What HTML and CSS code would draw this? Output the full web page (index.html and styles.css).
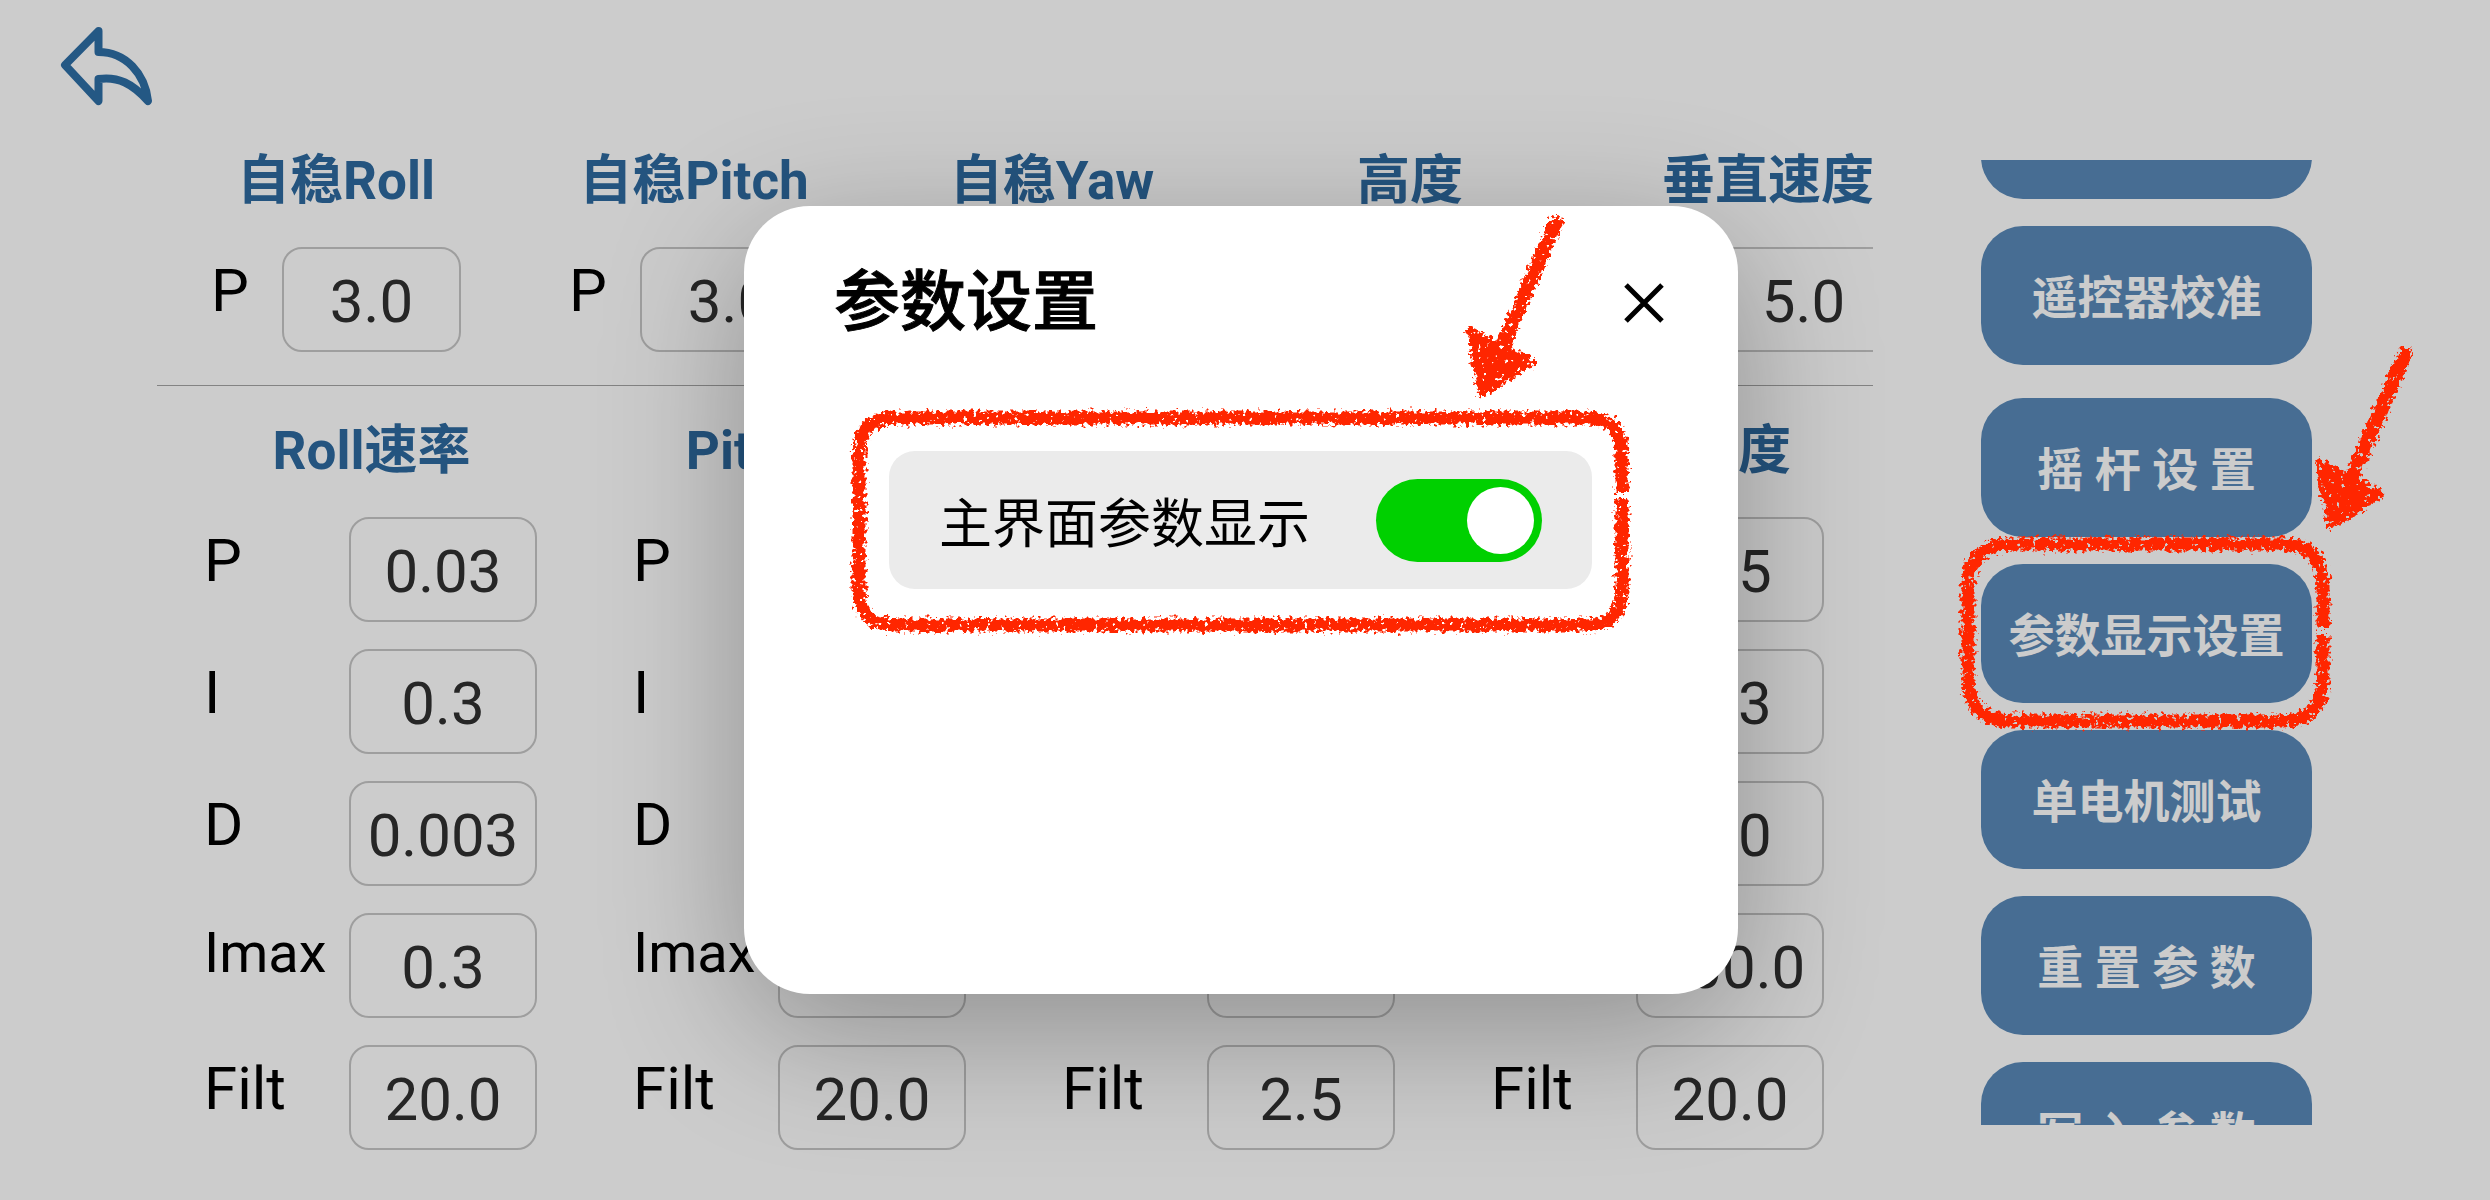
FILE: index.html
```html
<!DOCTYPE html>
<html lang="zh-CN">
<head>
<meta charset="utf-8">
<title>参数设置</title>
<link rel="stylesheet" href="styles.css">
</head>
<body>
<div class="page">
  <header class="topbar">
    <button class="back" type="button" aria-label="返回">
      <svg viewBox="0 0 96 84" width="96" height="84" aria-hidden="true"><path d="M38.500 7 L5 41 L38.500 77 V55 C58 52 73 60 88 77 C85 50 66 28 38.500 28 Z" /></svg>
    </button>
  </header>
  <div class="content">
    <main class="params">
      <div class="angle-grid">
        <section class="angle"><h2>自稳Roll</h2><div class="field"><label for="ar">P</label><input id="ar" value="3.0"></div></section>
        <section class="angle"><h2>自稳Pitch</h2><div class="field"><label for="ap">P</label><input id="ap" value="3.0"></div></section>
        <section class="angle"><h2>自稳Yaw</h2><div class="field"><label for="ay">P</label><input id="ay" value="3.0"></div></section>
        <section class="angle"><h2>高度</h2><div class="field"><label for="ah">P</label><input id="ah" value="1.0"></div></section>
        <section class="angle"><h2>垂直速度</h2><div class="field"><label for="av">P</label><input id="av" value="5.0"></div></section>
      </div>
      <hr>
      <div class="rate-grid">
        <section class="rate"><h2>Roll速率</h2>
          <div class="field"><label for="r1">P</label><input id="r1" value="0.03"></div>
          <div class="field"><label for="r2">I</label><input id="r2" value="0.3"></div>
          <div class="field"><label for="r3">D</label><input id="r3" value="0.003"></div>
          <div class="field"><label class="small" for="r4">Imax</label><input id="r4" value="0.3"></div>
          <div class="field"><label for="r5">Filt</label><input id="r5" value="20.0"></div>
        </section>
        <section class="rate"><h2>Pitch速率</h2>
          <div class="field"><label for="p1">P</label><input id="p1" value="0.03"></div>
          <div class="field"><label for="p2">I</label><input id="p2" value="0.3"></div>
          <div class="field"><label for="p3">D</label><input id="p3" value="0.003"></div>
          <div class="field"><label class="small" for="p4">Imax</label><input id="p4" value="0.3"></div>
          <div class="field"><label for="p5">Filt</label><input id="p5" value="20.0"></div>
        </section>
        <section class="rate"><h2>Yaw速率</h2>
          <div class="field"><label for="y1">P</label><input id="y1" value="0.2"></div>
          <div class="field"><label for="y2">I</label><input id="y2" value="0.02"></div>
          <div class="field"><label for="y3">D</label><input id="y3" value="0.0"></div>
          <div class="field"><label class="small" for="y4">Imax</label><input id="y4" value="0.3"></div>
          <div class="field"><label for="y5">Filt</label><input id="y5" value="2.5"></div>
        </section>
        <section class="rate"><h2>垂直加速度</h2>
          <div class="field"><label for="v1">P</label><input id="v1" value="0.5"></div>
          <div class="field"><label for="v2">I</label><input id="v2" value="0.3"></div>
          <div class="field"><label for="v3">D</label><input id="v3" value="0.0"></div>
          <div class="field"><label class="small" for="v4">Imax</label><input id="v4" value="100.0"></div>
          <div class="field"><label for="v5">Filt</label><input id="v5" value="20.0"></div>
        </section>
      </div>
    </main>
    <nav class="actions">
      <button type="button" aria-label="水平校准"></button>
      <button class="group-end" type="button">遥控器校准</button>
      <button type="button">摇 杆 设 置</button>
      <button type="button">参数显示设置</button>
      <button type="button">单电机测试</button>
      <button type="button">重 置 参 数</button>
      <button type="button">写 入 参 数</button>
    </nav>
  </div>
</div>

<div class="backdrop">
  <div class="dialog" role="dialog" aria-modal="true" aria-labelledby="dlg-title">
    <div class="dialog-head">
      <h1 id="dlg-title">参数设置</h1>
      <button class="close" type="button" aria-label="关闭">
        <svg viewBox="0 0 40 40" width="40" height="40" aria-hidden="true"><path d="M2 2 L38 38 M38 2 L2 38" /></svg>
      </button>
    </div>
    <div class="setting">
      <label for="show">主界面参数显示</label>
      <input class="switch" id="show" type="checkbox" role="switch" checked>
      <svg class="mark mark-setting" viewBox="0 0 800 450" width="800" height="450" aria-hidden="true">
        <g filter="url(#crayon)">
          <path class="ring" d="M772 306 V268 Q772 232 736 232 H44 Q9 232 9 268 V404 Q9 439 44 439 H736 Q772 439 772 404 V313" />
          <use href="#arrow" x="617" y="26" />
        </g>
      </svg>
    </div>
  </div>
</div>

<svg class="mark mark-action" viewBox="0 0 480 420" width="480" height="420" aria-hidden="true">
  <defs>
    <filter id="crayon" filterUnits="userSpaceOnUse" x="-20" y="-20" width="840" height="500">
      <feTurbulence type="fractalNoise" baseFrequency="0.25" numOctaves="3" seed="4" result="n" />
      <feDisplacementMap in="SourceGraphic" in2="n" scale="13" xChannelSelector="R" yChannelSelector="G" result="d" />
      <feTurbulence type="fractalNoise" baseFrequency="0.22" numOctaves="2" seed="9" />
      <feColorMatrix values="0 0 0 0 1  0 0 0 0 1  0 0 0 0 1  16 0 0 0 -4" result="holes" />
      <feComposite in="d" in2="holes" operator="in" />
    </filter>
    <g id="arrow">
      <path class="shaft" d="M89 10 L33 140" />
      <path class="head" d="M3 119 L64 150 L15 181 Z" />
    </g>
  </defs>
  <g filter="url(#crayon)">
    <path class="ring" d="M373 298 V256 Q373 214 331 214 H62 Q18 214 18 256 V348 Q18 391 62 391 H331 Q373 391 373 348 V305" />
    <use href="#arrow" x="366" y="14" />
  </g>
</svg>
</body>
</html>
```
FILE: styles.css
```css
* { box-sizing: border-box; }

body {
  margin: 0;
  background: #fff;
  color: #000;
  font-family: Roboto, "Noto Sans CJK SC", sans-serif;
  position: relative;
  overflow: hidden;
}

button, input { font: inherit; margin: 0; }
h1, h2 { margin: 0; }

.page { min-height: 100vh; }

.topbar { height: 140px; padding: 24px 60px; }

.back {
  display: block;
  padding: 0;
  border: 0;
  background: none;
}
.back svg { display: block; }
.back path {
  fill: none;
  stroke: #2e6ea6;
  stroke-width: 8px;
  stroke-linejoin: round;
}

.content {
  display: flex;
  align-items: flex-start;
  gap: 108px;
  padding: 0 178px 0 157px;
}

.params { flex: 1; min-width: 0; overflow: hidden; }

.params h2 {
  color: #2e6a9f;
  font-size: 53px;
  font-weight: 700;
  line-height: 82px;
  text-align: center;
  white-space: nowrap;
}

.angle-grid { display: grid; grid-template-columns: repeat(5, 358px); }
.rate-grid { display: grid; grid-template-columns: repeat(4, 1fr); }

.angle, .rate { display: flex; flex-direction: column; gap: 27px; }
.params h2 { margin-bottom: -2px; }
.angle .field { padding: 0 54px; }
.rate .field { padding: 0 49px 0 47px; }

.field { display: flex; justify-content: space-between; }
.field label { font-size: 60px; line-height: 88px; }
.field .small { font-size: 56px; line-height: 80px; }

.field input {
  width: 188px;
  height: 105px;
  padding: 3px 0 0;
  border: 2px solid #c6c6c6;
  border-radius: 20px;
  background: none;
  color: #303030;
  font-size: 60px;
  text-align: center;
}
.angle .field input { width: 179px; }

hr { height: 1px; margin: 33px 0 24px; border: 0; background: #a4a4a4; }

.actions {
  display: flex;
  flex-direction: column;
  flex: none;
  gap: 27px;
  width: 331px;
  height: calc(100vh - 235px);
  margin-top: 20px;
  overflow: hidden;
}
.actions button {
  flex: none;
  height: 139px;
  padding: 0 0 4px;
  border: 0;
  border-radius: 42px;
  background: #5989b8;
  color: #fff;
  font-size: 46px;
  font-weight: 700;
}
.actions button:first-child { margin-top: -100px; }
.actions .group-end { margin-bottom: 6px; }

.backdrop {
  position: absolute;
  inset: 0;
  display: flex;
  align-items: center;
  justify-content: center;
  padding-right: 8px;
  background: rgba(0, 0, 0, 0.2);
}

.dialog {
  width: 994px;
  min-height: 788px;
  padding: 52px 72px 52px 90px;
  border-radius: 66px;
  background: #fff;
  box-shadow: 0 36px 140px rgba(0, 0, 0, 0.3);
}

.dialog-head { display: flex; align-items: center; justify-content: space-between; }
.dialog-head h1 {
  font-size: 66px;
  font-weight: 500;
  line-height: 90px;
  -webkit-text-stroke: 1px #000;
}

.close { padding: 2px; border: 0; background: none; }
.close svg { display: block; }
.close path { fill: none; stroke: #000; stroke-width: 5px; }

.setting {
  position: relative;
  display: flex;
  align-items: center;
  justify-content: space-between;
  height: 138px;
  margin: 103px 74px 0 55px;
  padding: 0 50px;
  border-radius: 26px;
  background: #ebebeb;
}
.setting label { font-size: 53px; }

.switch {
  appearance: none;
  width: 166px;
  height: 83px;
  padding: 8px;
  border-radius: 42px;
  background: #00d000;
}
.switch::before {
  content: "";
  display: block;
  width: 67px;
  height: 67px;
  margin-left: auto;
  border-radius: 50%;
  background: #fff;
}

/* red crayon callouts */
.mark { position: absolute; overflow: visible; pointer-events: none; }
.mark-setting { left: -39px; top: -265px; }
.mark-action { right: 60px; top: 330px; }
.ring { fill: none; stroke: #ff2600; stroke-width: 13px; }
.shaft { fill: none; stroke: #ff2600; stroke-width: 14px; stroke-linecap: round; }
.head { fill: #ff2600; stroke: #ff2600; stroke-width: 8px; stroke-linejoin: round; }
```
